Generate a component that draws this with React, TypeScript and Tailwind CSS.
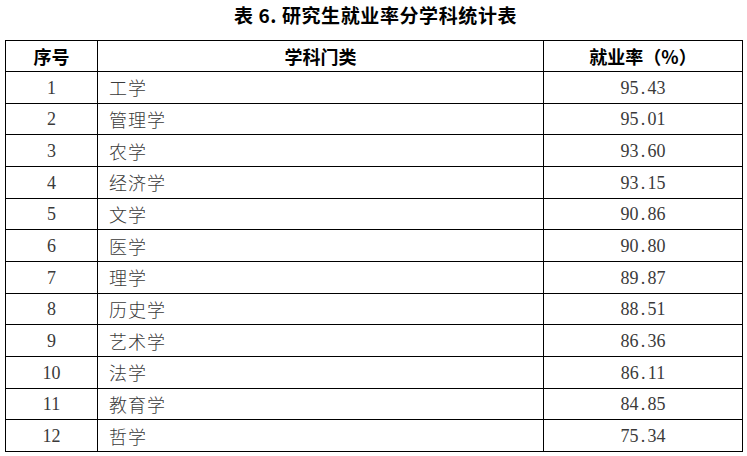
const rows: [string, string, string][] = [
  ["1", "工学", "95.43"],
  ["2", "管理学", "95.01"],
  ["3", "农学", "93.60"],
  ["4", "经济学", "93.15"],
  ["5", "文学", "90.86"],
  ["6", "医学", "90.80"],
  ["7", "理学", "89.87"],
  ["8", "历史学", "88.51"],
  ["9", "艺术学", "86.36"],
  ["10", "法学", "86.11"],
  ["11", "教育学", "84.85"],
  ["12", "哲学", "75.34"],
]

const sans = "font-['Noto_Sans_CJK_SC',sans-serif]"
const serif = "font-['Liberation_Serif','Noto_Sans_CJK_SC',serif]"

function Rate({ value }: { value: string }) {
  const [a, b] = value.split(".")
  return (
    <span>
      {a}
      <span className="inline-block w-[9px]">.</span>
      {b}
    </span>
  )
}

export default function App() {
  return (
    <div className="w-[747px] h-[456px] bg-white pt-[1px]">
      {/* title */}
      <h1 className={`${sans} text-center text-[19px] tracking-[0.6px] font-bold leading-[28px] h-[39px] text-black pl-[4px]`}>
        表 6. 研究生就业率分学科统计表
      </h1>

      <table className="ml-[5px] w-[737px] table-fixed border-collapse">
        <colgroup>
          <col className="w-[92px]" />
          <col className="w-[446px]" />
          <col className="w-[199px]" />
        </colgroup>
        <thead>
          <tr className={`${sans} h-[31px] text-[18px] font-bold text-black`}>
            <th className="border border-black text-center">序号</th>
            <th className="border border-black text-center">学科门类</th>
            <th className="border border-black text-center">就业率（%）</th>
          </tr>
        </thead>
        <tbody>
          {rows.map(([no, name, rate]) => (
            <tr key={no} className="h-[31.67px] text-[18px] text-[#3a3a3a]">
              <td className={`${serif} border border-black text-center pt-[2px]`}>{no}</td>
              <td className={`${sans} font-light border border-black pl-[11px] tracking-[1px] pt-[1px]`}>{name}</td>
              <td className={`${serif} border border-black text-center pt-[2px]`}>
                <Rate value={rate} />
              </td>
            </tr>
          ))}
        </tbody>
      </table>
    </div>
  )
}
